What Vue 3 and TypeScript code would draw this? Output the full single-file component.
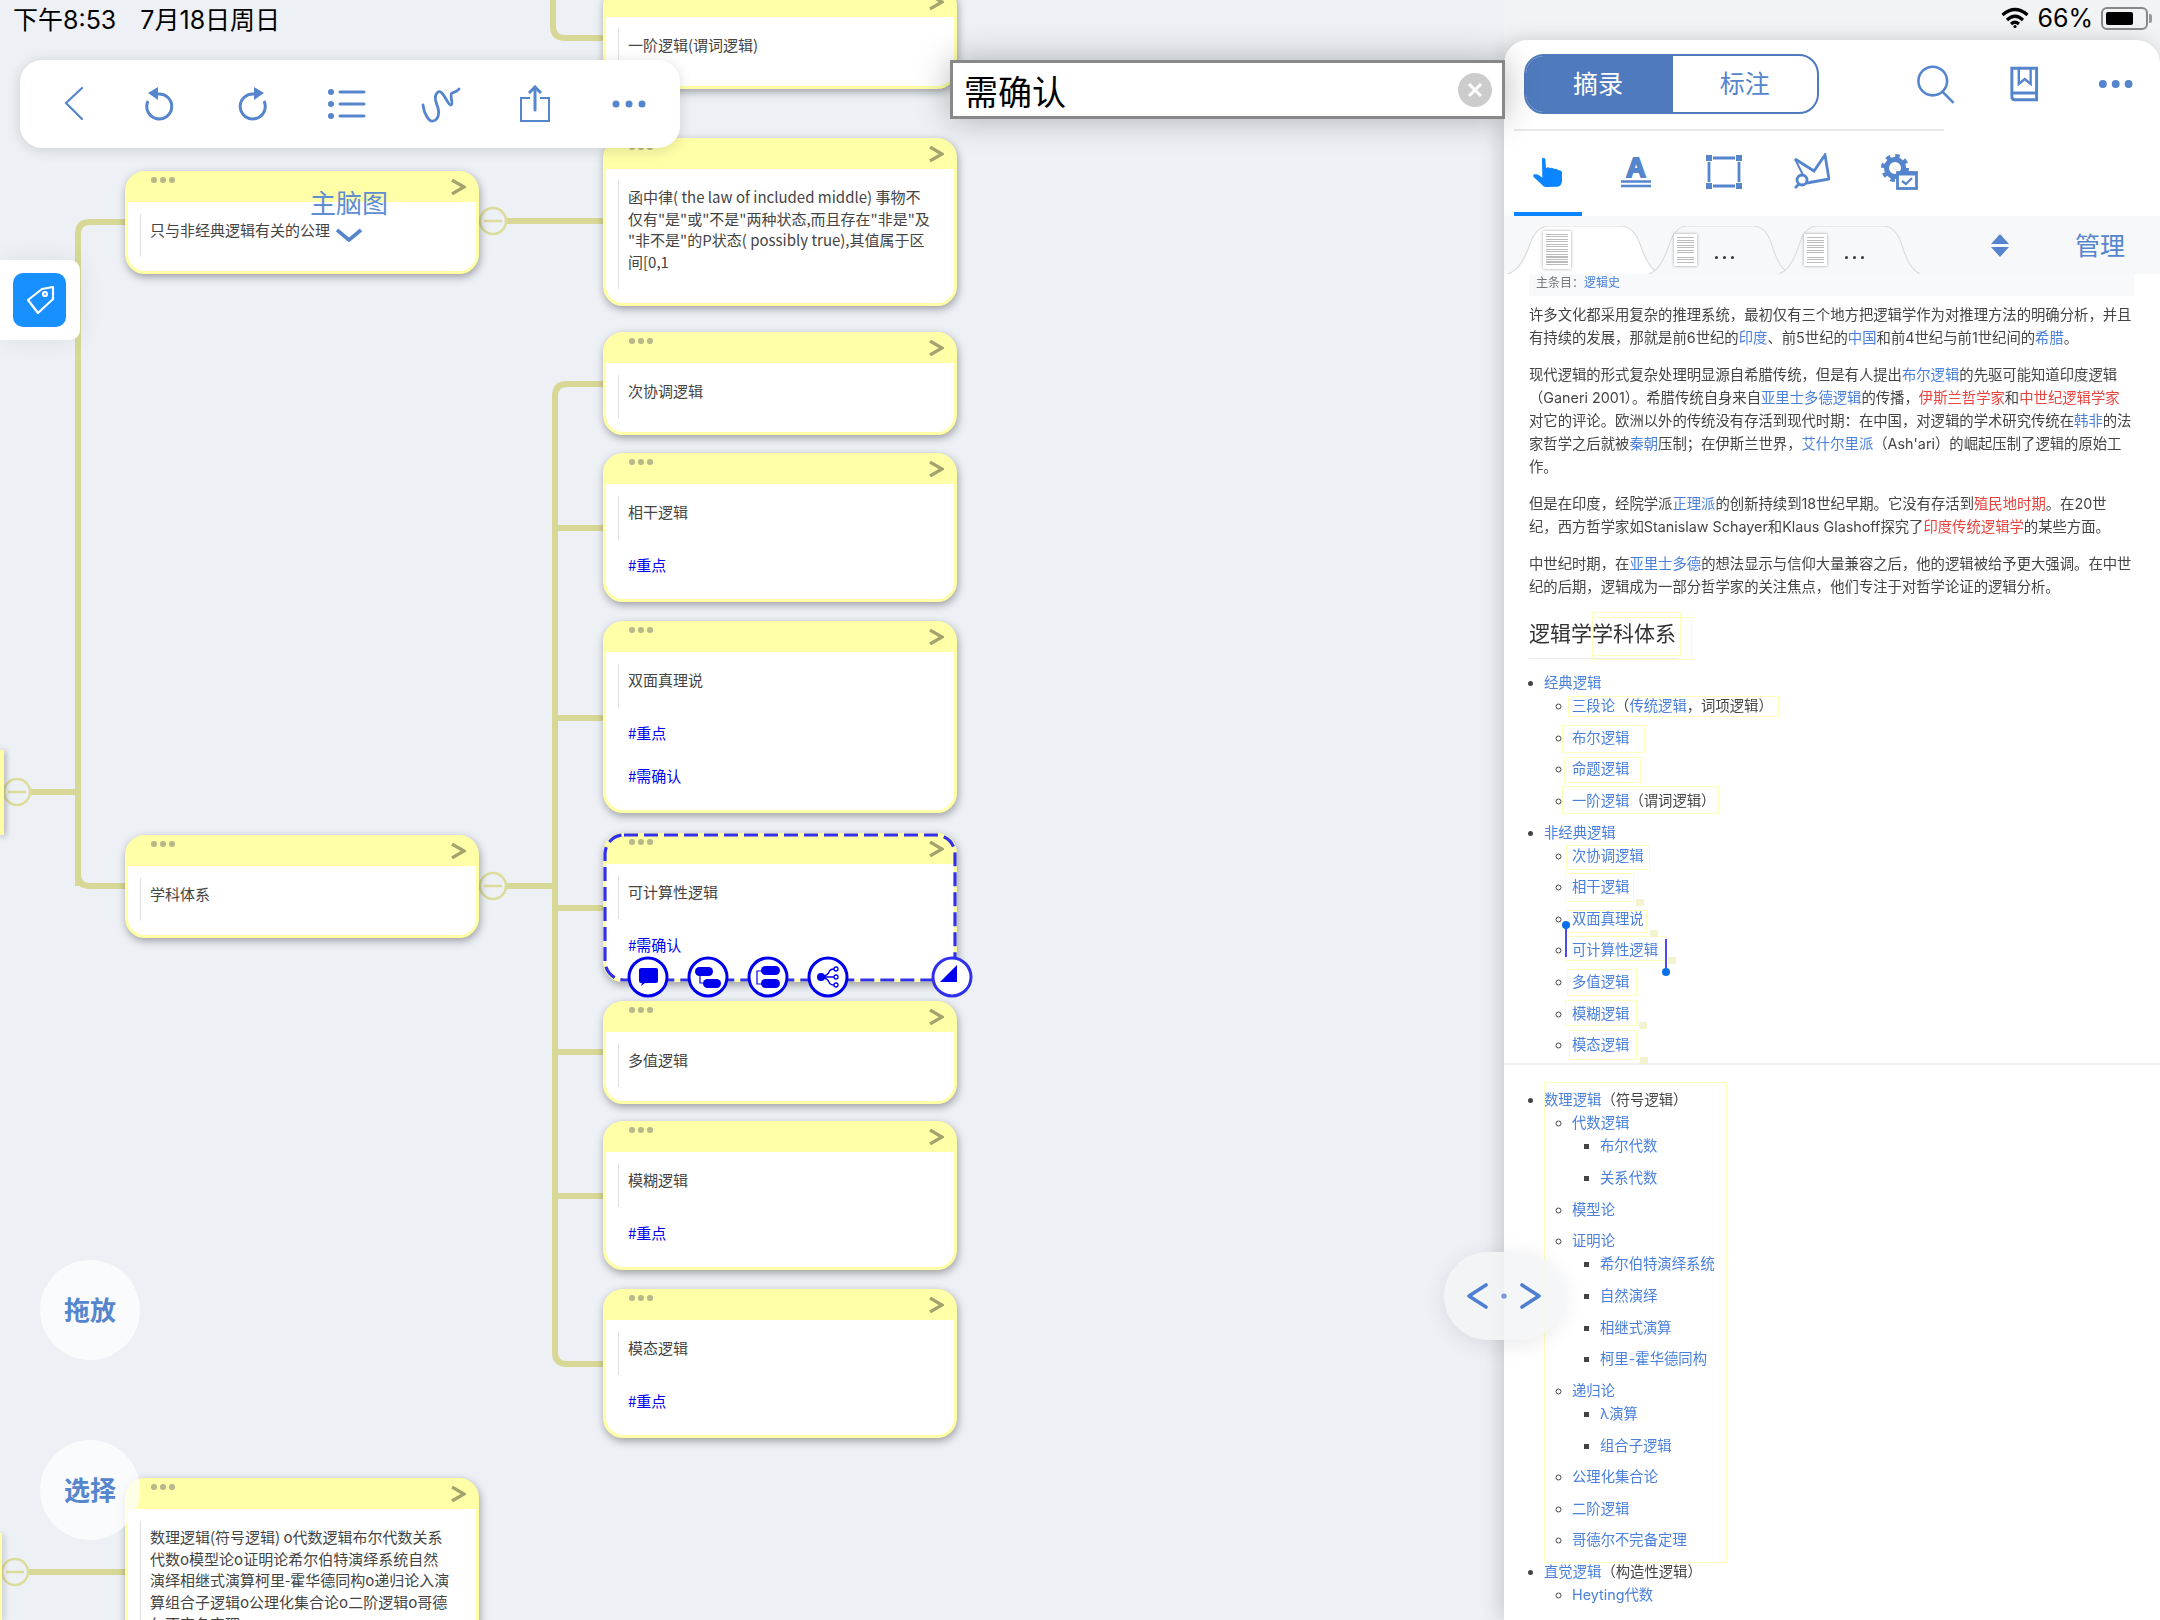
<template>
  <div class="page">
    <!-- mind map canvas -->
    <main class="canvas">
      <svg class="wires" width="1504" height="1620" fill="none">
        <g stroke="#d8d896" stroke-width="6">
          <path d="M30 792 H78 M78 886 V234 Q78 222 90 222 H125 M78 792 V874 Q78 886 90 886 H125" />
          <path d="M506 221 H603 M553 -10 V26 Q553 38 565 38 H603" />
          <path d="M506 886 H555 M603 384 H567 Q555 384 555 396 V1352 Q555 1364 567 1364 H603" />
          <path d="M555 528 H603 M555 718 H603 M555 908 H603 M555 1052 H603 M555 1196 H603" />
          <path d="M28 1572 H125" />
        </g>
        <g v-for="c in collapsers" :key="c.x + '-' + c.y" stroke="#dcdc9c" stroke-width="2.5">
          <circle :cx="c.x" :cy="c.y" r="13" fill="#edf0f5" />
          <path :d="`M${c.x - 9} ${c.y} H${c.x + 9}`" />
        </g>
      </svg>

      <div class="edge" style="top: 750px; height: 85px; width: 4px"></div>
      <div class="edge" style="top: 1533px; height: 87px; width: 2px"></div>

      <article
        v-for="n in nodes"
        :key="n.text"
        class="card"
        :class="{ selected: n.selected }"
        :style="{ left: n.x + 'px', top: n.y + 'px', height: n.h ? n.h + 'px' : undefined }"
      >
        <header class="card-head">
          <span class="grip"><i></i><i></i><i></i></span>
          <svg width="16" height="16" viewBox="0 0 16 16" fill="none" stroke="#a3a36e" stroke-width="3.2">
            <path d="M2 1 L14 8 L2 15" />
          </svg>
        </header>
        <div class="card-body">
          <p class="note">{{ n.text }}</p>
          <div v-if="n.tags" class="tags">
            <span v-for="t in n.tags" :key="t">#{{ t }}</span>
          </div>
        </div>
        <template v-if="n.selected">
          <svg class="dash" width="354" height="149" fill="none">
            <rect x="2" y="2" width="350" height="145" rx="19" stroke="#3030ee" stroke-width="3.2" stroke-dasharray="14 6" />
          </svg>
          <div class="actions">
            <svg class="act" style="left: 23px" width="44" height="44" viewBox="-22 -22 44 44">
              <circle r="19" fill="#fff" stroke="#0000ee" stroke-width="3" />
              <path fill="#0000ee" d="M-9 -7 Q-9 -9 -7 -9 H8 Q10 -9 10 -7 V4 Q10 6 8 6 H-3 L-7 9 L-6 6 H-7 Q-9 6 -9 4 Z" />
            </svg>
            <svg class="act" style="left: 83px" width="44" height="44" viewBox="-22 -22 44 44">
              <circle r="19" fill="#fff" stroke="#0000ee" stroke-width="3" />
              <rect x="-13" y="-10" width="18" height="9" rx="4.5" fill="#0000ee" />
              <rect x="-5" y="2" width="18" height="9" rx="4.5" fill="#0000ee" />
              <path d="M-8 -2 V6 H-5" fill="none" stroke="#0000ee" stroke-width="1.2" />
            </svg>
            <svg class="act" style="left: 143px" width="44" height="44" viewBox="-22 -22 44 44">
              <circle r="19" fill="#fff" stroke="#0000ee" stroke-width="3" />
              <rect x="-7" y="-11" width="19" height="9" rx="4.5" fill="#0000ee" />
              <rect x="-7" y="2" width="19" height="9" rx="4.5" fill="#0000ee" />
              <path d="M-7 -6 H-11 V7 H-7" fill="none" stroke="#0000ee" stroke-width="1.2" />
            </svg>
            <svg class="act" style="left: 203px" width="44" height="44" viewBox="-22 -22 44 44">
              <circle r="19" fill="#fff" stroke="#0000ee" stroke-width="3" />
              <circle cx="-7" r="4" fill="#0000ee" />
              <g fill="none" stroke="#0000ee" stroke-width="1.3">
                <path d="M-4 0 H6 M-4 -1 Q0 -2 1 -5 Q2 -8 6 -8 M-4 1 Q0 2 1 5 Q2 8 6 8" />
                <circle cx="8" cy="-8" r="2" /><circle cx="8" cy="0" r="2" /><circle cx="8" cy="8" r="2" />
              </g>
            </svg>
            <svg class="act" style="left: 327px" width="44" height="44" viewBox="-22 -22 44 44">
              <circle r="19" fill="#fff" stroke="#3030ee" stroke-width="3" />
              <path fill="#0000ee" d="M-12 5 L5 -12 V5 Z" />
            </svg>
          </div>
        </template>
      </article>

      <div class="brain">
        <span>主脑图</span>
        <svg width="28" height="14" viewBox="0 0 28 14" fill="none" stroke="#5585cc" stroke-width="3.6">
          <path d="M2 2 L14 12 L26 2" />
        </svg>
      </div>

      <nav class="toolbar">
        <svg class="first" width="40" height="40" viewBox="0 0 40 40" fill="none" stroke="#5585cc" stroke-width="2.2" stroke-linecap="round">
          <path d="M28 4 L12 19 L28 35" />
        </svg>
        <svg class="undo" width="40" height="40" viewBox="0 0 40 40" fill="none" stroke="#5585cc" stroke-width="3">
          <path d="M12 17 A12.5 12.5 0 1 0 22 10" />
          <path d="M12 9 L22 3 V16 Z" fill="#5585cc" stroke="none" />
        </svg>
        <svg class="redo" width="40" height="40" viewBox="0 0 40 40" fill="none" stroke="#5585cc" stroke-width="3">
          <path d="M28 17 A12.5 12.5 0 1 1 18 10" />
          <path d="M28 9 L18 3 V16 Z" fill="#5585cc" stroke="none" />
        </svg>
        <svg width="40" height="40" viewBox="0 0 40 40" fill="#5585cc" stroke="#5585cc">
          <circle cx="4" cy="8" r="3" stroke="none" /><circle cx="4" cy="20" r="3" stroke="none" /><circle cx="4" cy="32" r="3" stroke="none" />
          <path d="M13 8 H37 M13 20 H37 M13 32 H37" stroke-width="3" stroke-linecap="round" />
        </svg>
        <svg width="40" height="40" viewBox="0 0 40 40" fill="none" stroke="#5585cc" stroke-width="2.8" stroke-linecap="round" stroke-linejoin="round">
          <path d="M2 21 C3 30 8 38 12 37 C17 36 19 30 17 24 C15 18 12 12 17 8 C22 5 27 22 30 21 C33 20 28 11 31 9 C33 8 36 8 38 5" />
        </svg>
        <svg width="40" height="40" viewBox="0 0 40 40" fill="none" stroke="#5585cc" stroke-width="2">
          <path d="M15 14 H6 V37 H34 V14 H25" />
          <path d="M20 3 V26" stroke-width="3" stroke-linecap="round" />
          <path d="M14 9 L20 3 L26 9" stroke-width="3" />
        </svg>
        <svg width="40" height="40" viewBox="0 0 40 40" fill="#5585cc">
          <circle cx="7" cy="20" r="3.5" /><circle cx="20" cy="20" r="3.5" /><circle cx="33" cy="20" r="3.5" />
        </svg>
      </nav>

      <div class="tag-tile">
        <span class="tag-btn">
          <svg width="53" height="54" viewBox="0 0 53 54" fill="none" stroke="#fff" stroke-width="2.2" stroke-linejoin="round">
            <path d="M29 16 L40 14 L40 26 L25 40 L15 27 Z" />
            <circle cx="32" cy="21" r="2" />
          </svg>
        </span>
      </div>

      <button class="round" style="top: 1260px" type="button">拖放</button>
      <button class="round" style="top: 1440px" type="button">选择</button>
    </main>

    <!-- excerpt panel -->
    <aside class="side">
      <section class="panel">
        <div class="head">
          <div class="segment">
            <span class="seg on">摘录</span>
            <span class="seg">标注</span>
          </div>
          <svg class="h-first" width="50" height="50" viewBox="0 0 50 50" fill="none" stroke="#5585cc" stroke-width="2.6">
            <circle cx="23" cy="22" r="14.5" />
            <path d="M33 33 L44 44" />
          </svg>
          <svg width="50" height="50" viewBox="0 0 50 50" fill="none" stroke="#5585cc" stroke-width="3">
            <path d="M12 9 H37 V41 H15 Q12 41 12 38 Z" />
            <path d="M12 34 H37" />
            <path d="M19 9 V25 L25 20 L31 25 V9" stroke-width="2.4" />
          </svg>
          <svg width="50" height="50" viewBox="0 0 50 50" fill="#5585cc">
            <circle cx="12" cy="25" r="4" /><circle cx="25" cy="25" r="4" /><circle cx="38" cy="25" r="4" />
          </svg>
        </div>
        <div class="rule"></div>

        <div class="tools">
          <span class="tool on">
            <svg width="30" height="30" viewBox="0 0 90 90" fill="#0a84ff">
              <path d="M27 6 Q32 -2 37 6 L39 34 Q46 28 51 34 Q58 30 63 36 Q72 34 76 40 Q85 38 87 46 L87 72 Q86 88 73 89 L40 90 Q34 90 30 86 L2 60 Q-2 53 5 52 Q12 51 18 55 L28 62 Z" />
            </svg>
          </span>
          <span class="tool">
            <svg width="32" height="32" viewBox="0 0 32 32">
              <text x="16" y="21" text-anchor="middle" class="tool-a">A</text>
              <path d="M1 25.5 H31 M1 30 H31" stroke="#5585cc" stroke-width="2.6" />
            </svg>
          </span>
          <span class="tool">
            <svg width="36" height="34" viewBox="0 0 36 34" fill="#5585cc">
              <rect x="0" y="0" width="6" height="6" /><rect x="30" y="0" width="6" height="6" />
              <rect x="0" y="28" width="6" height="6" /><rect x="30" y="28" width="6" height="6" />
              <path d="M7 3 H29 M7 31 H29 M3 7 V27 M33 7 V27" fill="none" stroke="#5585cc" stroke-width="2.8" />
            </svg>
          </span>
          <span class="tool">
            <svg width="36" height="37" viewBox="0 0 36 37" fill="none" stroke="#5585cc" stroke-width="2.8">
              <path d="M1 6 L20 18 L31 2 L35 26 L13 30" />
              <path d="M1 6 L9 22" stroke-width="2" />
              <circle cx="8" cy="27" r="5" />
              <path d="M5 31 L1 35" />
            </svg>
          </span>
          <span class="tool">
            <svg width="38" height="38" viewBox="0 0 38 38" fill="none" stroke="#5585cc">
              <circle cx="14" cy="15" r="8.5" stroke-width="5" />
              <circle cx="14" cy="15" r="12" stroke-width="4" stroke-dasharray="4.5 4.9" />
              <rect x="16.5" y="19.5" width="19" height="16" fill="#fff" stroke-width="2.8" />
              <path d="M17 21 H35" stroke-width="3" />
              <path d="M21 28 L25 31 L31 25" stroke-width="2.2" />
            </svg>
          </span>
        </div>

        <div class="tabs">
          <div v-for="(t, i) in 3" :key="t" class="tab" :class="{ on: i === 0 }">
            <svg class="tab-shape" viewBox="0 0 152 48" preserveAspectRatio="none">
              <path d="M0 48 C12 44 18 30 22 18 C26 6 32 0 42 0 H112 C122 0 128 6 132 18 C136 30 142 44 152 48" stroke="#dcdcdc" stroke-width="1.2" />
            </svg>
            <span class="thumb"></span>
            <span v-if="i > 0" class="more"><i></i><i></i><i></i></span>
          </div>
          <svg class="sort" width="18" height="24" viewBox="0 0 18 24" fill="#5585cc">
            <path d="M9 0 L18 10 H0 Z M0 13 H18 L9 23 Z" />
          </svg>
          <span class="manage">管理</span>
        </div>

        <div class="doc">
          <div class="entry">主条目：<a>逻辑史</a></div>
          <p>许多文化都采用复杂的推理系统，最初仅有三个地方把逻辑学作为对推理方法的明确分析，并且有持续的发展，那就是前6世纪的<a>印度</a>、前5世纪的<a>中国</a>和前4世纪与前1世纪间的<a>希腊</a>。</p>
          <p>现代逻辑的形式复杂处理明显源自希腊传统，但是有人提出<a>布尔逻辑</a>的先驱可能知道印度逻辑（Ganeri 2001）。希腊传统自身来自<a>亚里士多德逻辑</a>的传播，<a class="red">伊斯兰哲学家</a>和<a class="red">中世纪逻辑学家</a><br />对它的评论。欧洲以外的传统没有存活到现代时期：在中国，对逻辑的学术研究传统在<a>韩非</a>的法家哲学之后就被<a>秦朝</a>压制；在伊斯兰世界，<a>艾什尔里派</a>（Ash'ari）的崛起压制了逻辑的原始工作。</p>
          <p>但是在印度，经院学派<a>正理派</a>的创新持续到18世纪早期。它没有存活到<a class="red">殖民地时期</a>。在20世纪，西方哲学家如Stanislaw Schayer和Klaus Glashoff探究了<a class="red">印度传统逻辑学</a>的某些方面。</p>
          <p>中世纪时期，在<a>亚里士多德</a>的想法显示与信仰大量兼容之后，他的逻辑被给予更大强调。在中世纪的后期，逻辑成为一部分哲学家的关注焦点，他们专注于对哲学论证的逻辑分析。</p>
          <h2>逻辑学学科体系</h2>
          <template v-for="(list, li) in outline" :key="li">
            <hr v-if="li > 0" />
            <ul>
              <li
                v-for="(item, i) in list"
                :key="item.link"
                :class="['lv' + item.level, { gap: i > 0 && list[i - 1].level >= item.level }]"
              >
                <a>{{ item.link }}</a>{{ item.rest }}<a v-if="item.link2">{{ item.link2 }}</a>{{ item.rest2 }}
              </li>
            </ul>
          </template>
        </div>
      </section>
    </aside>

    <!-- overlays -->
    <div class="search">
      <span>需确认</span>
      <span class="clear">
        <svg width="34" height="34" viewBox="0 0 34 34" stroke="#fff" stroke-width="3">
          <circle cx="17" cy="17" r="17" fill="#ccc" stroke="none" />
          <path d="M11 11 L23 23 M23 11 L11 23" />
        </svg>
      </span>
    </div>

    <span v-for="(m, i) in marks" :key="'m' + i" class="mark" :style="boxStyle(m)"></span>
    <span v-for="(c, i) in notes" :key="'c' + i" class="mini" :style="{ left: c[0] + 'px', top: c[1] + 'px' }"></span>
    <svg class="handles" width="2160" height="1620">
      <path d="M1566 925 V957 M1666 939 V972" stroke="#4a4af0" stroke-width="2" />
      <circle cx="1566" cy="925" r="4" fill="#0b6fe8" />
      <circle cx="1666" cy="972" r="4" fill="#0b6fe8" />
    </svg>

    <div class="pager">
      <svg width="76" height="30" viewBox="0 0 76 30" fill="none" stroke="#4f7fcf" stroke-width="3.6" stroke-linecap="round" stroke-linejoin="round">
        <path d="M20 4 L3 15 L20 26 M56 4 L73 15 L56 26" />
        <circle cx="38" cy="15" r="2.6" fill="#6f97d6" stroke="none" />
      </svg>
    </div>

    <div class="status">
      <div class="clock"><span>下午8:53</span><span>7月18日周日</span></div>
      <div class="sys">
        <svg width="28" height="22" viewBox="0 0 28 22" fill="none" stroke="#000" stroke-width="3.2">
          <path d="M1.5 8 Q14 -3 26.5 8 M6 13 Q14 5.5 22 13 M10 17 Q14 13.5 18 17" />
          <circle cx="14" cy="19.5" r="1.6" fill="#000" stroke="none" />
        </svg>
        <span>66%</span>
        <span class="battery"><i></i></span>
      </div>
    </div>
  </div>
</template>

<script setup lang="ts">
interface MapNode {
  x: number
  y: number
  h?: number
  text: string
  tags?: string[]
  selected?: boolean
}

interface OutlineItem {
  level: number
  link: string
  rest?: string
  link2?: string
  rest2?: string
}

const collapsers = [
  { x: 493, y: 221 },
  { x: 493, y: 886 },
  { x: 17, y: 792 },
  { x: 15, y: 1572 }
]

const nodes: MapNode[] = [
  { x: 603, y: -14, text: '一阶逻辑(谓词逻辑)' },
  {
    x: 603,
    y: 138,
    text: '函中律( the law of included middle) 事物不\n仅有"是"或"不是"两种状态,而且存在"非是"及\n"非不是"的P状态( possibly true),其值属于区\n间[0,1'
  },
  { x: 603, y: 332, text: '次协调逻辑' },
  { x: 603, y: 453, text: '相干逻辑', tags: ['重点'] },
  { x: 603, y: 621, text: '双面真理说', tags: ['重点', '需确认'] },
  { x: 603, y: 833, text: '可计算性逻辑', tags: ['需确认'], selected: true },
  { x: 603, y: 1001, text: '多值逻辑' },
  { x: 603, y: 1121, text: '模糊逻辑', tags: ['重点'] },
  { x: 603, y: 1289, text: '模态逻辑', tags: ['重点'] },
  { x: 125, y: 171, text: '只与非经典逻辑有关的公理' },
  { x: 125, y: 835, text: '学科体系' },
  {
    x: 125,
    y: 1478,
    h: 300,
    text: '数理逻辑(符号逻辑) o代数逻辑布尔代数关系\n代数o模型论o证明论希尔伯特演绎系统自然\n演绎相继式演算柯里-霍华德同构o递归论入演\n算组合子逻辑o公理化集合论o二阶逻辑o哥德\n尔不完备定理'
  }
]

const outline: OutlineItem[][] = [
  [
    { level: 1, link: '经典逻辑' },
    { level: 2, link: '三段论', rest: '（', link2: '传统逻辑', rest2: '，词项逻辑）' },
    { level: 2, link: '布尔逻辑' },
    { level: 2, link: '命题逻辑' },
    { level: 2, link: '一阶逻辑', rest: '（谓词逻辑）' },
    { level: 1, link: '非经典逻辑' },
    { level: 2, link: '次协调逻辑' },
    { level: 2, link: '相干逻辑' },
    { level: 2, link: '双面真理说' },
    { level: 2, link: '可计算性逻辑' },
    { level: 2, link: '多值逻辑' },
    { level: 2, link: '模糊逻辑' },
    { level: 2, link: '模态逻辑' }
  ],
  [
    { level: 1, link: '数理逻辑', rest: '（符号逻辑）' },
    { level: 2, link: '代数逻辑' },
    { level: 3, link: '布尔代数' },
    { level: 3, link: '关系代数' },
    { level: 2, link: '模型论' },
    { level: 2, link: '证明论' },
    { level: 3, link: '希尔伯特演绎系统' },
    { level: 3, link: '自然演绎' },
    { level: 3, link: '相继式演算' },
    { level: 3, link: '柯里-霍华德同构' },
    { level: 2, link: '递归论' },
    { level: 3, link: 'λ演算' },
    { level: 3, link: '组合子逻辑' },
    { level: 2, link: '公理化集合论' },
    { level: 2, link: '二阶逻辑' },
    { level: 2, link: '哥德尔不完备定理' },
    { level: 1, link: '直觉逻辑', rest: '（构造性逻辑）' },
    { level: 2, link: 'Heyting代数' }
  ]
]

// yellow excerpt outlines laid over the page: x, y, w, h
const marks: number[][] = [
  [1592, 612, 89, 44],
  [1592, 617, 100, 43],
  [1568, 696, 211, 21],
  [1562, 725, 83, 28],
  [1564, 757, 77, 26],
  [1562, 786, 157, 28],
  [1566, 845, 84, 25],
  [1565, 873, 69, 29],
  [1567, 910, 80, 23],
  [1565, 936, 101, 25],
  [1567, 969, 70, 27],
  [1565, 1000, 72, 26],
  [1569, 1030, 68, 30],
  [1544, 1082, 183, 481]
]

const notes: number[][] = [
  [1636, 899],
  [1650, 930],
  [1668, 957],
  [1639, 1022],
  [1640, 1057]
]

const boxStyle = (m: number[]) => ({
  left: m[0] + 'px',
  top: m[1] + 'px',
  width: m[2] + 'px',
  height: m[3] + 'px'
})
</script>

<style scoped>
.page {
  position: relative;
  width: 2160px;
  height: 1620px;
  display: grid;
  grid-template-columns: 1504px 656px;
  overflow: hidden;
  font-family: "Noto Sans CJK SC", "Liberation Sans", sans-serif;
  color: #444;
}

/* canvas */
.canvas {
  position: relative;
  background: #edf0f5;
  overflow: hidden;
}
.wires {
  position: absolute;
  left: 0;
  top: 0;
}
.edge {
  position: absolute;
  left: 0;
  background: #ffffa8;
  box-shadow: 1px 1px 6px rgba(0, 0, 0, 0.4);
}
.card {
  position: absolute;
  width: 354px;
  box-sizing: border-box;
  border: 3px solid #ffffa8;
  border-radius: 20px;
  background: #ffffa8;
  box-shadow: 1px 3px 9px rgba(0, 0, 0, 0.35);
}
.card.selected {
  z-index: 2;
}
.card-head {
  height: 28px;
  box-sizing: border-box;
  display: flex;
  justify-content: space-between;
  padding: 0 10px 0 23px;
}
.card-head svg {
  margin-top: 5px;
}
.grip {
  display: flex;
  gap: 3.5px;
  margin-top: 3px;
}
.grip i {
  width: 5.5px;
  height: 5.5px;
  border-radius: 50%;
  background: #b8b88a;
}
.card-body {
  background: #fff;
  border-radius: 0 0 17px 17px;
  padding: 12px 12px 14px;
}
.note {
  margin: 0;
  padding: 5px 0 16.3px 9px;
  border-left: 1px solid #e0e0e0;
  font-size: 15px;
  line-height: 21.7px;
  color: #444;
  white-space: pre-line;
}
.tags {
  display: flex;
  flex-direction: column;
  gap: 21px;
  margin: 15px 0 9px 10px;
  font-size: 15px;
  line-height: 22px;
  color: #0000ee;
}
.dash {
  position: absolute;
  left: -3px;
  top: -3px;
}
.actions {
  position: absolute;
  left: -3px;
  top: 119px;
  width: 354px;
  height: 44px;
}
.act {
  position: absolute;
  top: 0;
}
.brain {
  position: absolute;
  left: 289px;
  top: 183px;
  width: 120px;
  display: flex;
  flex-direction: column;
  align-items: center;
  gap: 7px;
  font-size: 26px;
  line-height: 38px;
  color: #5f8dd3;
  z-index: 3;
}
.toolbar {
  position: absolute;
  left: 20px;
  top: 60px;
  width: 660px;
  height: 88px;
  box-sizing: border-box;
  padding-left: 34px;
  display: flex;
  align-items: center;
  gap: 54px;
  background: #fff;
  border-radius: 22px;
  box-shadow: 0 2px 14px rgba(0, 0, 0, 0.14);
  z-index: 4;
}
.toolbar .first {
  margin-right: -9px;
}
.toolbar .undo {
  margin-left: -3px;
}
.toolbar .redo {
  margin: 0 -3px 0 6px;
}
.tag-tile {
  position: absolute;
  left: 0;
  top: 260px;
  width: 80px;
  height: 80px;
  box-sizing: border-box;
  padding: 13px 0 0 13px;
  background: #fff;
  border-radius: 0 10px 10px 0;
  box-shadow: 0 0 24px rgba(0, 0, 0, 0.08);
  z-index: 4;
}
.tag-btn {
  display: block;
  width: 53px;
  height: 54px;
  border-radius: 10px;
  background: #1890ff;
}
.round {
  position: absolute;
  left: 40px;
  width: 100px;
  height: 100px;
  padding: 0 0 3px;
  border: 0;
  border-radius: 50%;
  background: rgba(255, 255, 255, 0.7);
  font-family: inherit;
  font-size: 26px;
  font-weight: 700;
  color: #5585cc;
  z-index: 4;
}

/* right panel */
.side {
  background: #f2f3f4;
  padding-top: 40px;
  position: relative;
}
.panel {
  height: 1580px;
  box-sizing: border-box;
  background: #fff;
  border-radius: 24px 24px 0 0;
  box-shadow: -4px 0 20px rgba(0, 0, 0, 0.16);
  overflow: hidden;
}
.head {
  display: flex;
  align-items: center;
  height: 89px;
  padding: 0 20px 2px;
  box-sizing: border-box;
  gap: 41px;
}
.head .h-first {
  margin-left: 50px;
}
.segment {
  display: flex;
  width: 298px;
  height: 60px;
  box-sizing: border-box;
  border: 2px solid #4f7bbe;
  border-radius: 20px;
  overflow: hidden;
}
.seg {
  flex: 1;
  display: flex;
  align-items: center;
  justify-content: center;
  padding-bottom: 3px;
  font-size: 25px;
  color: #5585cc;
}
.seg.on {
  flex: 0 0 147px;
  padding-right: 3px;
  box-sizing: border-box;
  background: #4f7bbe;
  color: #fff;
}
.rule {
  width: 430px;
  height: 2px;
  margin-left: 10px;
  background: #e8e8e8;
}
.tools {
  display: flex;
  gap: 20px;
  margin-left: 10px;
  height: 85px;
}
.tool {
  width: 68px;
  box-sizing: border-box;
  border-bottom: 4px solid transparent;
  display: flex;
  align-items: center;
  justify-content: center;
}
.tool.on {
  border-bottom-color: #0a84ff;
}
.tool-a {
  font-family: "Liberation Sans", sans-serif;
  font-weight: 700;
  font-size: 27px;
  fill: #5585cc;
  stroke: #5585cc;
  stroke-width: 2;
}
.tabs {
  height: 58px;
  display: flex;
  align-items: flex-end;
  padding: 0 35px 0 4px;
  background: #f7f8f9;
}
.tab {
  position: relative;
  width: 141px;
  height: 48px;
  margin-left: -11px;
}
.tab:first-child {
  width: 152px;
  margin-left: 0;
}
.tab-shape {
  position: absolute;
  inset: 0;
  width: 100%;
  height: 100%;
  fill: #f7f8f9;
}
.tab.on .tab-shape {
  fill: #fff;
}
.thumb {
  position: absolute;
  left: 25px;
  top: 8px;
  width: 23px;
  height: 32px;
  padding: 3px;
  box-sizing: border-box;
  background: repeating-linear-gradient(#bbb 0 1px, #fff 1px 2.5px) content-box, #fff;
  box-shadow: 0 0 3px rgba(0, 0, 0, 0.35);
}
.tab.on .thumb {
  left: 35px;
  top: 5px;
  width: 28px;
  height: 38px;
}
.more {
  position: absolute;
  left: 66px;
  top: 30px;
  display: flex;
  gap: 5px;
}
.more i {
  width: 3px;
  height: 3px;
  border-radius: 50%;
  background: #333;
}
.sort {
  margin-left: auto;
  margin-right: 66px;
  margin-bottom: 16px;
}
.manage {
  font-size: 25px;
  line-height: 34px;
  margin-bottom: 13px;
  color: #5585cc;
}
.doc {
  padding: 0 26px 0 25px;
  font-family: Inter, "Noto Sans CJK SC", sans-serif;
  font-size: 14.35px;
  line-height: 23px;
  color: #444;
  filter: blur(0.35px);
}
.doc a {
  color: #4a80dc;
}
.doc a.red {
  color: #e8443f;
}
.entry {
  height: 22px;
  padding-left: 7px;
  background: #f8f9fa;
  font-size: 12px;
  line-height: 17px;
  color: #777;
}
.doc p {
  margin: 7px 0 14px;
}
.doc h2 {
  margin: 21px 0 12px;
  padding-bottom: 9px;
  border-bottom: 1px solid #eaecef;
  width: 150px;
  font-size: 21px;
  font-weight: 400;
  line-height: 30px;
  color: #333;
  white-space: nowrap;
}
.doc ul {
  margin: 0;
  padding: 0 0 0 15px;
  line-height: 23px;
}
.doc li.gap {
  margin-top: 8.65px;
}
.doc li.lv1 {
  list-style: disc;
}
.doc li.lv2 {
  list-style: circle;
  margin-left: 28px;
}
.doc li.lv3 {
  list-style: square;
  margin-left: 56px;
}
.doc hr {
  height: 2px;
  border: 0;
  background: #f0f0f0;
  margin: 7px -26px 23px -25px;
}

/* overlays */
.search {
  position: absolute;
  left: 950px;
  top: 60px;
  width: 555px;
  height: 59px;
  box-sizing: border-box;
  padding: 0 10px 0 11px;
  display: flex;
  align-items: center;
  justify-content: space-between;
  background: #fff;
  border: 3px solid #888;
  box-shadow: 0 0 34px rgba(0, 0, 0, 0.28);
  font-size: 34px;
  color: #000;
  z-index: 5;
}
.search > span:first-child {
  position: relative;
  top: 1px;
}
.clear {
  display: flex;
}
.mark {
  position: absolute;
  box-sizing: border-box;
  border: 1.5px solid #fdfdbc;
  z-index: 5;
}
.mini {
  position: absolute;
  width: 8px;
  height: 7px;
  background: #f3f3cf;
  z-index: 5;
}
.handles {
  position: absolute;
  left: 0;
  top: 0;
  z-index: 6;
}
.pager {
  position: absolute;
  left: 1444px;
  top: 1252px;
  width: 120px;
  height: 88px;
  border-radius: 44px;
  display: flex;
  align-items: center;
  justify-content: center;
  background: rgba(243, 244, 246, 0.85);
  box-shadow: 0 4px 22px rgba(0, 0, 0, 0.09);
  z-index: 7;
}
.status {
  position: absolute;
  left: 0;
  top: 0;
  width: 100%;
  height: 36px;
  box-sizing: border-box;
  padding: 0 12px 0 13px;
  display: flex;
  align-items: center;
  justify-content: space-between;
  font-family: Inter, "Noto Sans CJK SC", sans-serif;
  font-size: 25px;
  color: #000;
  z-index: 8;
}
.clock {
  display: flex;
  gap: 24px;
}
.sys {
  display: flex;
  align-items: center;
  gap: 8px;
}
.battery {
  position: relative;
  width: 47px;
  height: 23px;
  box-sizing: border-box;
  padding: 3px;
  border: 2px solid #888;
  border-radius: 6px;
}
.battery i {
  display: block;
  width: 27px;
  height: 100%;
  background: #000;
  border-radius: 2px;
}
.battery::after {
  content: '';
  position: absolute;
  right: -6px;
  top: 5px;
  width: 3px;
  height: 9px;
  background: #999;
  border-radius: 0 2px 2px 0;
}
</style>

<style>
html,
body {
  margin: 0;
  background: #edf0f5;
}
</style>
